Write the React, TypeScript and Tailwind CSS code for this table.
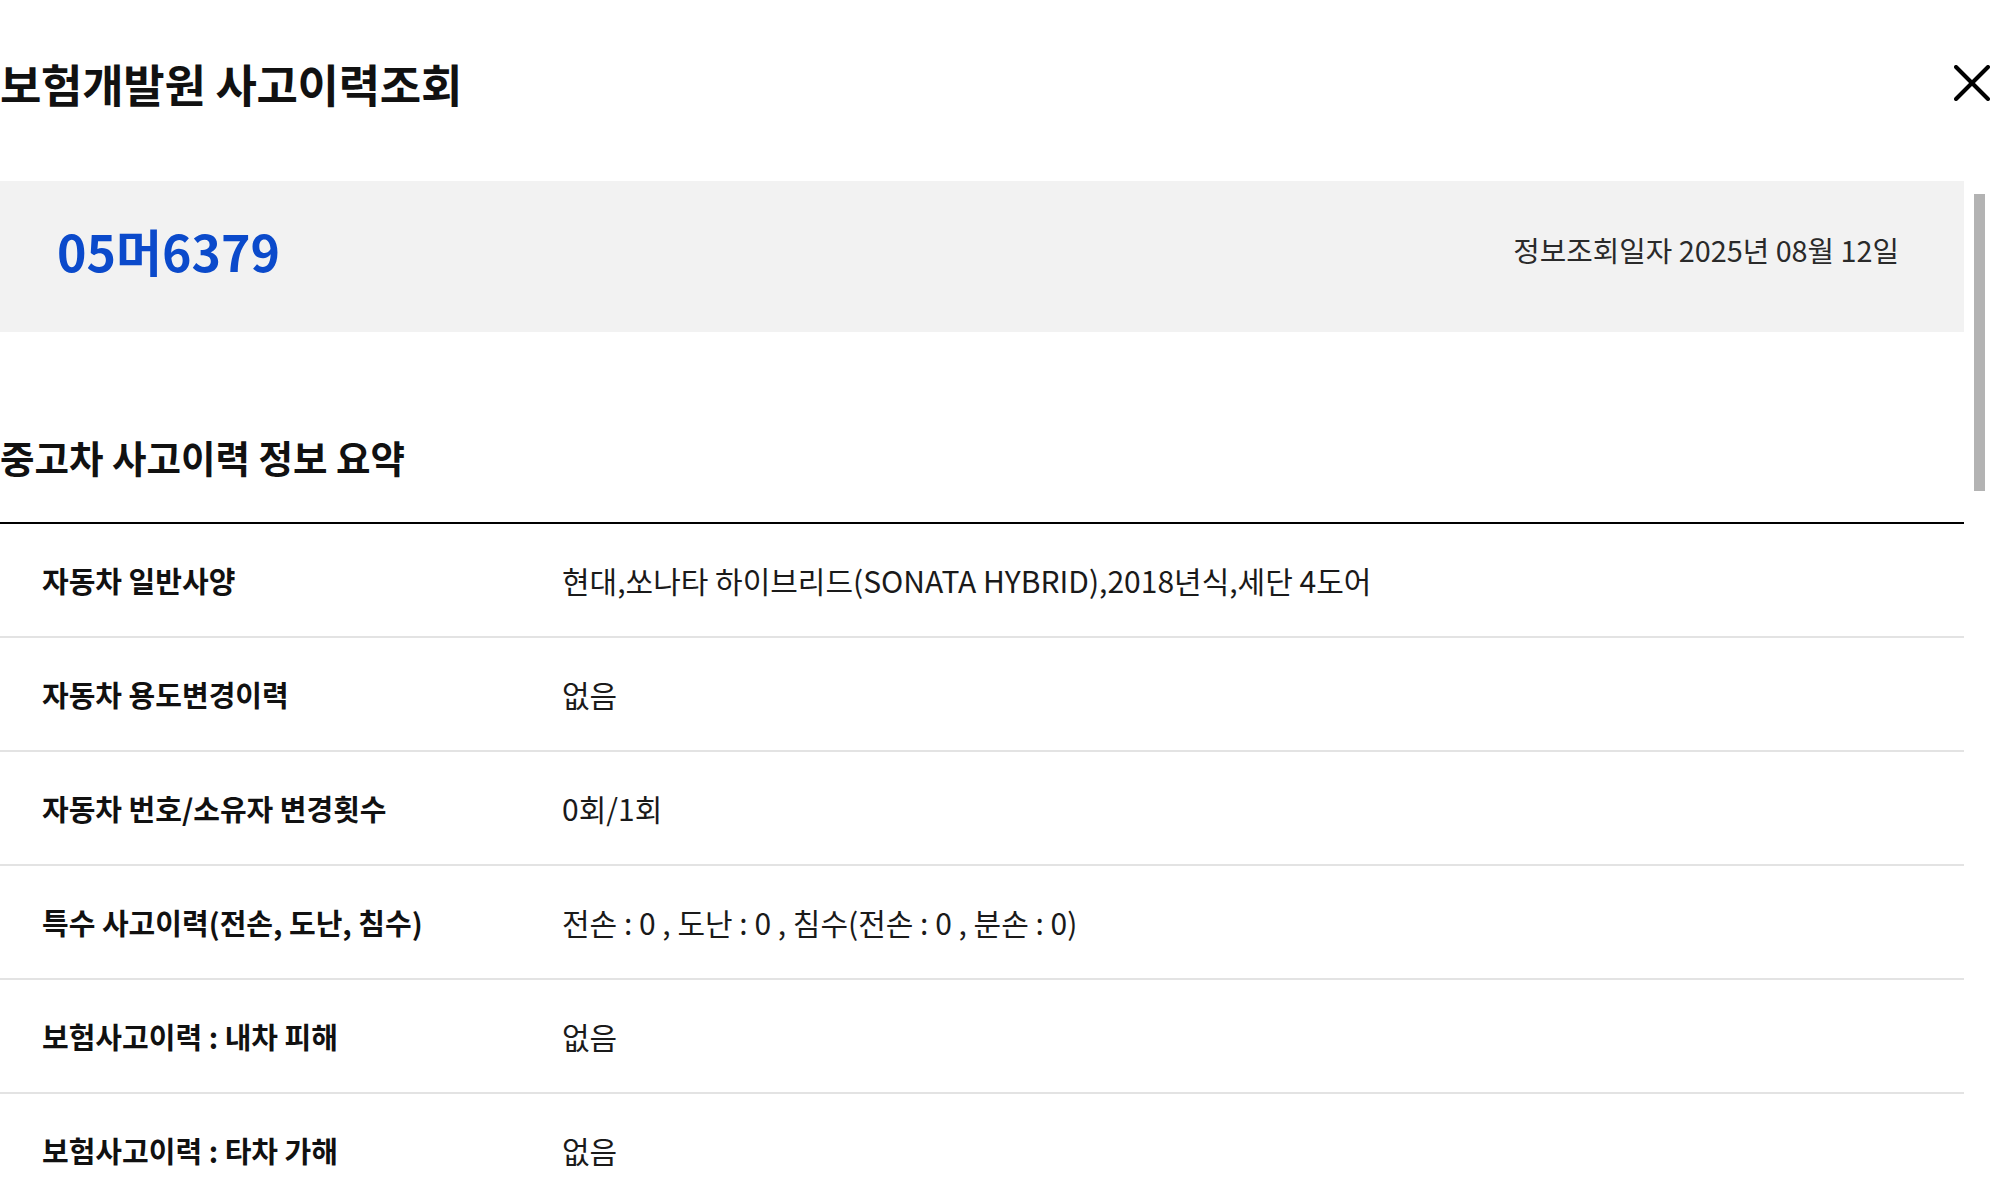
const rows = [
  { label: '자동차 일반사양', value: '현대,쏘나타 하이브리드(SONATA HYBRID),2018년식,세단 4도어' },
  { label: '자동차 용도변경이력', value: '없음' },
  { label: '자동차 번호/소유자 변경횟수', value: '0회/1회' },
  { label: '특수 사고이력(전손, 도난, 침수)', value: '전손 : 0 , 도난 : 0 , 침수(전손 : 0 , 분손 : 0)' },
  { label: '보험사고이력 : 내차 피해', value: '없음' },
  { label: '보험사고이력 : 타차 가해', value: '없음' },
]

export default function App() {
  return (
    <div className="relative w-[2000px] h-[1200px] overflow-hidden bg-white text-[#111] font-['Noto_Sans_CJK_KR','Noto_Sans',sans-serif]">
      <header className="flex items-center justify-between h-[166px] pr-[10px]">
        <h1 className="text-[45px] font-bold leading-none tracking-[-0.3px]">보험개발원 사고이력조회</h1>
        <button className="text-black">
          <svg width="36" height="36" viewBox="0 0 36 36" fill="none" stroke="currentColor" strokeWidth="4" strokeLinecap="round">
            <line x1="2" y1="2" x2="34" y2="34" />
            <line x1="34" y1="2" x2="2" y2="34" />
          </svg>
        </button>
      </header>

      <div className="mt-[15px] w-[1964px] h-[151px] bg-[#f2f2f2] flex items-center justify-between pl-[57px] pr-[65px] pb-[13px]">
        <span className="text-[50px] font-bold leading-none text-[#0b4acb]">05머6379</span>
        <span className="text-[28.8px] leading-none text-[#2a2a2a]">정보조회일자 2025년 08월 12일</span>
      </div>

      <div className="h-[190px] flex items-end pb-[47px]">
        <h2 className="text-[37.5px] font-bold leading-none">중고차 사고이력 정보 요약</h2>
      </div>

      <div className="w-[1964px] border-t-2 border-black">
        {rows.map((row) => (
          <div key={row.label} className="flex items-center h-[114px] border-b-2 border-[#e3e3e3]">
            <div className="w-[562px] pl-[42px] text-[29px] font-bold leading-none">{row.label}</div>
            <div className="text-[30px] leading-none text-[#1a1a1a]">{row.value}</div>
          </div>
        ))}
      </div>

      {/* scrollbar thumb */}
      <div className="absolute left-[1974px] top-[194px] w-[11px] h-[297px] bg-[#b3b3b3]" />
    </div>
  )
}
